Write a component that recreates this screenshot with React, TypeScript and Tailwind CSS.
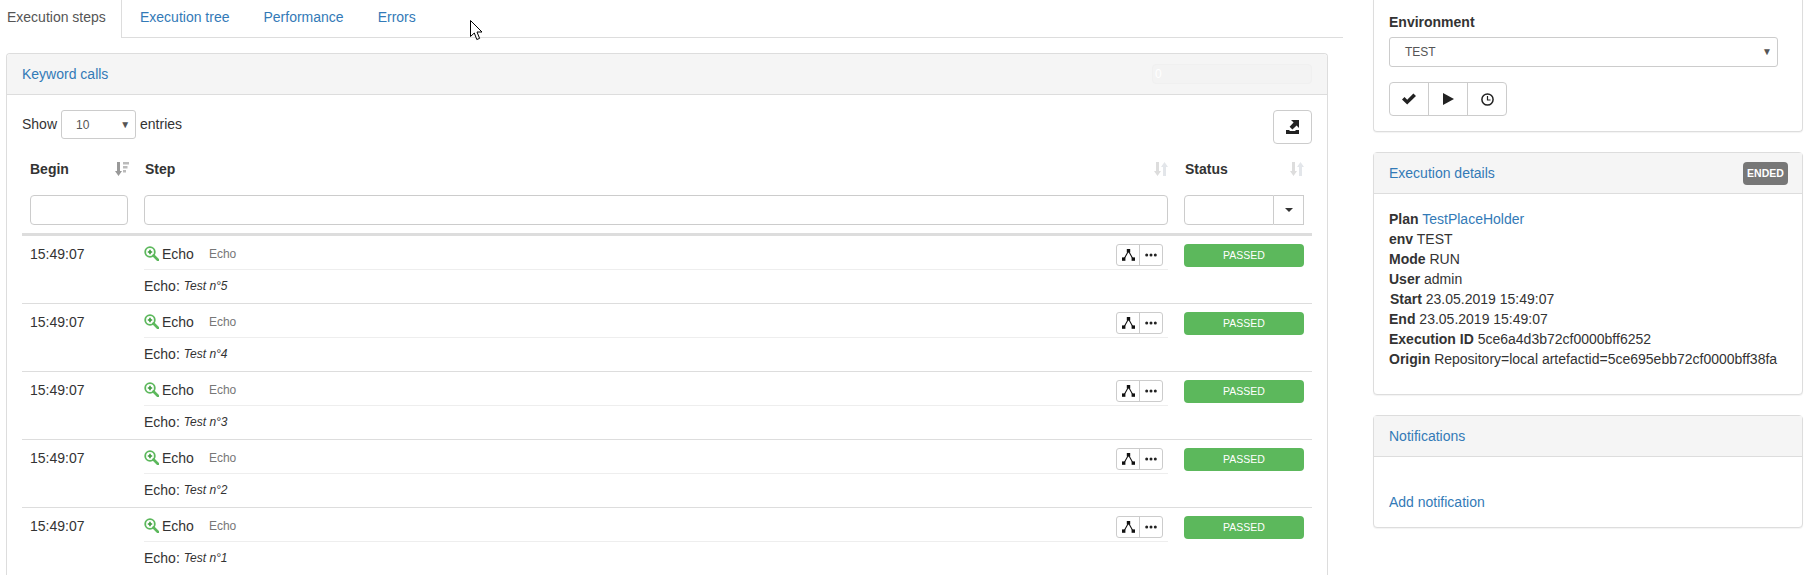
import { ReactNode } from "react"

const steps = [5, 4, 3, 2, 1]

const details: [string, string][] = [
  ["env", "TEST"],
  ["Mode", "RUN"],
  ["User", "admin"],
  ["Start", "23.05.2019 15:49:07"],
  ["End", "23.05.2019 15:49:07"],
  ["Execution ID", "5ce6a4d3b72cf0000bff6252"],
  ["Origin", "Repository=local artefactid=5ce695ebb72cf0000bff38fa"]
]

function ZoomIcon() {
  return (
    <svg width="15" height="15" viewBox="0 0 15 15" className="shrink-0">
      <circle cx="6" cy="6" r="4.8" fill="none" stroke="#5cb85c" strokeWidth="1.8" />
      <path d="M9.5 9.5 L14 14" stroke="#5cb85c" strokeWidth="2.6" strokeLinecap="round" />
      <path d="M3.8 6 H8.2 M6 3.8 V8.2" stroke="#3f9a3f" strokeWidth="1.6" />
    </svg>
  )
}

function SortIcon({ active }: { active?: boolean }) {
  if (active) {
    return (
      <svg width="14" height="14" viewBox="0 0 14 14">
        <path d="M2 0 H5 V9 H7 L3.5 14 L0 9 H2 Z" fill="#999" />
        <path d="M8 0 H14 V2.5 H8 Z M8 4 H12.5 V6.5 H8 Z M8 8 H11 V10.5 H8 Z" fill="#bbb" />
      </svg>
    )
  }
  return (
    <svg width="14" height="14" viewBox="0 0 14 14">
      <path d="M2 0 H5 V9 H7 L3.5 14 L0 9 H2 Z" fill="#ddd" />
      <path d="M9 14 H12 V5 H14 L10.5 0 L7 5 H9 Z" fill="#e3e6ea" />
    </svg>
  )
}

function TreeIcon() {
  return (
    <svg width="13" height="12" viewBox="0 0 13 12">
      <path d="M6.5 2 L2 10 M6.5 2 L11 10" stroke="#111" strokeWidth="1.1" fill="none" />
      <rect x="4.8" y="0" width="3.4" height="3.4" fill="#111" />
      <rect x="0" y="8.4" width="3.4" height="3.4" fill="#111" />
      <rect x="9.6" y="8.4" width="3.4" height="3.4" fill="#111" />
    </svg>
  )
}

function DotsIcon() {
  return (
    <svg width="12" height="4" viewBox="0 0 12 4">
      <circle cx="1.7" cy="2" r="1.5" fill="#222" />
      <circle cx="6" cy="2" r="1.5" fill="#222" />
      <circle cx="10.3" cy="2" r="1.5" fill="#222" />
    </svg>
  )
}

function ExportIcon() {
  return (
    <svg width="13" height="14" viewBox="0 0 13 14">
      <path d="M0 10 H3 L4 11 H9 L10 10 H13 V14 H0 Z" fill="#222" />
      <path d="M5 0 H13 V8 L10.6 5.6 L6.4 9.6 L3.6 6.8 L7.6 2.6 Z" fill="#222" />
    </svg>
  )
}

function CheckIcon() {
  return (
    <svg width="14" height="12" viewBox="0 0 14 12">
      <path d="M0 6.5 L2.5 4 L5.2 6.7 L11.4 0.5 L14 3 L5.2 11.6 Z" fill="#222" />
    </svg>
  )
}

function PlayIcon() {
  return (
    <svg width="11" height="12" viewBox="0 0 11 12">
      <path d="M0 0 L11 6 L0 12 Z" fill="#222" />
    </svg>
  )
}

function ClockIcon() {
  return (
    <svg width="13" height="13" viewBox="0 0 13 13">
      <circle cx="6.5" cy="6.5" r="5.6" fill="none" stroke="#222" strokeWidth="1.5" />
      <path d="M6.5 3 V7 H9.5" fill="none" stroke="#222" strokeWidth="1.2" />
    </svg>
  )
}

function Panel({ title, right, children, className }: { title: string; right?: ReactNode; children: ReactNode; className: string }) {
  return (
    <div className={"rounded-[4px] border border-[#ddd] bg-white shadow-[0_1px_1px_rgba(0,0,0,0.05)] " + className}>
      <div className="flex h-[41px] items-center justify-between border-b border-[#ddd] bg-[#f5f5f5] pl-[15px] pr-[14px]">
        <a className="text-[#337ab7]">{title}</a>
        {right}
      </div>
      {children}
    </div>
  )
}

function StepRow({ n }: { n: number }) {
  return (
    <div className="grid h-[68px] shrink-0 grid-cols-[114px_1041px_135px] border-b border-[#ddd]">
      <div className="pl-[8px] pt-[8px] leading-[20px]">15:49:07</div>
      <div className="pl-[8px] pr-[9px]">
        <div className="flex h-[34px] items-start border-b border-[#eee] pt-[8px]">
          <div className="mt-[2px]"><ZoomIcon /></div>
          <span className="ml-[3px] leading-[20px]">Echo</span>
          <span className="ml-[15px] text-[12px] leading-[21px] text-[#777]">Echo</span>
          <div className="ml-auto mr-[5px] flex h-[22px] w-[47px] rounded-[3px] border border-[#ccc]">
            <div className="flex w-[23px] items-center justify-center border-r border-[#ccc]"><TreeIcon /></div>
            <div className="flex flex-1 items-center justify-center"><DotsIcon /></div>
          </div>
        </div>
        <div className="flex h-[33px] items-center pb-[2px]">
          <span>Echo:</span>
          <span className="ml-[4px] text-[12px] italic">Test n°{n}</span>
        </div>
      </div>
      <div className="pl-[7px] pr-[8px] pt-[8px]">
        <div className="flex h-[23px] items-center justify-center rounded-[4px] bg-[#5cb85c] pb-[2px] text-[10.5px] text-white">PASSED</div>
      </div>
    </div>
  )
}

export default function App() {
  return (
    <div className="relative flex h-[575px] w-[1820px] overflow-hidden bg-white font-['Liberation_Sans',Arial,sans-serif] text-[14px] leading-[20px] text-[#333]">
      <div className="flex w-[1343px] shrink-0 flex-col">
        <div className="flex h-[38px] shrink-0 items-start border-b border-[#ddd]">
          <div className="flex h-[38px] w-[122px] items-center border-r border-[#ddd] bg-white pl-[7px] pb-[4px] text-[#555]">Execution steps</div>
          <div className="flex h-[33px] items-center text-[#337ab7]">
            <a className="ml-[18px]">Execution tree</a>
            <a className="ml-[34px]">Performance</a>
            <a className="ml-[34px]">Errors</a>
          </div>
        </div>

        <div className="ml-[6px] mt-[15px] flex w-[1322px] flex-1 flex-col rounded-t-[4px] border border-b-0 border-[#ddd]">
          <div className="flex h-[41px] shrink-0 items-center justify-between rounded-t-[4px] border-b border-[#ddd] bg-[#f5f5f5] pl-[15px] pr-[15px]">
            <a className="text-[#337ab7]">Keyword calls</a>
            <div className="flex h-[20px] w-[160px] items-center rounded-[4px] border border-[#f0f0f0] bg-[#f3f3f3] pl-[2px] text-[12px] text-white">0</div>
          </div>

          <div className="flex min-h-0 flex-1 flex-col pl-[15px] pr-[15px]">
            <div className="flex h-[55px] shrink-0 items-start pt-[15px]">
              <div className="flex h-[29px] items-center">
                <span className="pb-[2px]">Show</span>
                <div className="ml-[4px] flex h-[29px] w-[75px] items-center justify-between rounded-[3px] border border-[#ccc] pl-[14px] pr-[5px] text-[12px] text-[#555]">
                  <span>10</span>
                  <span className="text-[10px]">▼</span>
                </div>
                <span className="ml-[4px] pb-[2px]">entries</span>
              </div>
              <button className="ml-auto flex h-[34px] w-[39px] items-center justify-center rounded-[4px] border border-[#ccc]">
                <ExportIcon />
              </button>
            </div>

            <div className="grid h-[38px] shrink-0 grid-cols-[114px_1041px_135px] items-center font-bold">
              <div className="flex items-center justify-between pl-[8px] pr-[7px]">
                <span>Begin</span>
                <SortIcon active />
              </div>
              <div className="flex items-center justify-between pl-[9px] pr-[9px]">
                <span>Step</span>
                <SortIcon />
              </div>
              <div className="flex items-center justify-between pl-[8px] pr-[8px]">
                <span>Status</span>
                <SortIcon />
              </div>
            </div>

            <div className="grid h-[48px] shrink-0 grid-cols-[114px_1041px_135px] border-b-[3px] border-[#ddd] pt-[7px]">
              <div className="pl-[8px] pr-[8px]">
                <div className="h-[30px] rounded-[4px] border border-[#ccc]" />
              </div>
              <div className="pl-[8px] pr-[9px]">
                <div className="h-[30px] rounded-[4px] border border-[#ccc]" />
              </div>
              <div className="flex pl-[7px] pr-[8px]">
                <div className="h-[30px] flex-1 rounded-l-[4px] border border-[#ccc]" />
                <div className="flex h-[30px] w-[30px] items-center justify-center border border-l-0 border-[#ccc]">
                  <div className="h-0 w-0 border-x-[4px] border-t-[4px] border-x-transparent border-t-[#333]" />
                </div>
              </div>
            </div>

            {steps.map((n) => (
              <StepRow key={n} n={n} />
            ))}
          </div>
        </div>
      </div>

      <div className="ml-[30px] flex w-[430px] shrink-0 flex-col">
        <div className="h-[132px] shrink-0 rounded-b-[4px] border border-t-0 border-[#ddd] pl-[15px] pr-[25px] shadow-[0_1px_1px_rgba(0,0,0,0.05)]">
          <div className="pt-[12px] font-bold">Environment</div>
          <div className="mt-[5px] flex h-[30px] w-[389px] items-center justify-between rounded-[3px] border border-[#ccc] pl-[15px] pr-[5px] text-[12px] text-[#555]">
            <span>TEST</span>
            <span className="text-[10px]">▼</span>
          </div>
          <div className="mt-[15px] flex h-[34px] w-[118px] rounded-[4px] border border-[#ccc]">
            <div className="flex flex-1 items-center justify-center border-r border-[#ccc]"><CheckIcon /></div>
            <div className="flex flex-1 items-center justify-center border-r border-[#ccc]"><PlayIcon /></div>
            <div className="flex flex-1 items-center justify-center"><ClockIcon /></div>
          </div>
        </div>

        <Panel
          title="Execution details"
          className="mt-[20px] h-[243px] shrink-0"
          right={<span className="flex h-[23px] w-[45px] items-center justify-center rounded-[4px] bg-[#777] text-[10.5px] font-bold text-white">ENDED</span>}
        >
          <div className="pl-[15px] pt-[15px]">
            <div><b>Plan</b> <a className="text-[#337ab7]">TestPlaceHolder</a></div>
            {details.map(([label, value]) => (
              <div key={label} className={label === "Start" ? "pl-px" : ""}><b>{label}</b> {value}</div>
            ))}
          </div>
        </Panel>

        <Panel title="Notifications" className="mt-[20px] h-[113px] shrink-0">
          <div className="pl-[15px] pt-[35px]">
            <a className="text-[#337ab7]">Add notification</a>
          </div>
        </Panel>
      </div>

      <svg width="13" height="21" viewBox="0 0 13 21" className="absolute left-[470px] top-[20px]">
        <path d="M0.5 0.5 V16.5 L4.3 13 L6.8 19.5 L9.6 18.4 L7 12 H12 Z" fill="#fff" stroke="#000" strokeWidth="1" />
      </svg>
    </div>
  )
}
